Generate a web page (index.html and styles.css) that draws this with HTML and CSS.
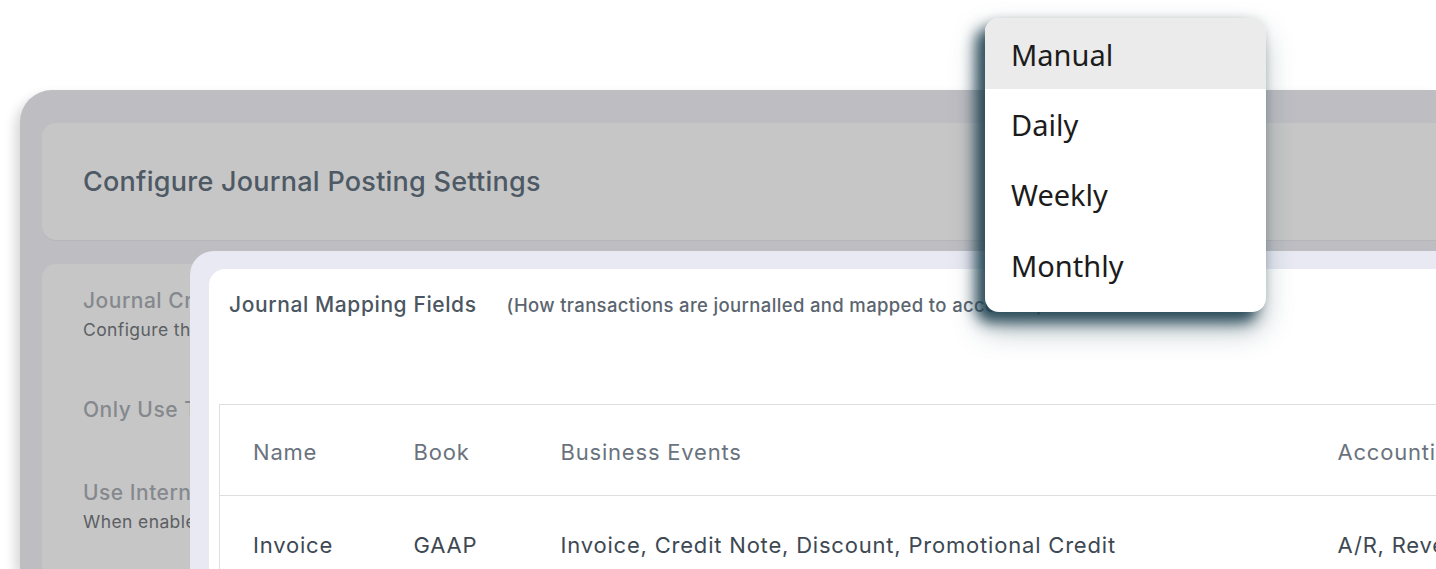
FILE: index.html
```html
<!DOCTYPE html>
<html lang="en">
<head>
<meta charset="utf-8">
<title>Configure Journal Posting Settings</title>
<link rel="stylesheet" href="styles.css">
</head>
<body>
<div class="stage">
  <div class="window">
    <section class="header-card">
      <h1 class="page-title">Configure Journal Posting Settings</h1>
    </section>
    <section class="settings-card">
      <div class="setting">
        <div class="setting-title">Journal Creation Frequency</div>
        <div class="setting-desc">Configure the frequency at which journals are created</div>
      </div>
      <div class="setting setting-single">
        <div class="setting-title">Only Use Transactions After Go-Live</div>
      </div>
      <div class="setting">
        <div class="setting-title">Use Internal Accounts</div>
        <div class="setting-desc">When enabled, internal accounts are used for postings</div>
      </div>
    </section>
  </div>

  <div class="modal">
    <div class="modal-inner">
      <div class="modal-head">
        <span class="modal-title">Journal Mapping Fields</span>
        <span class="modal-sub">(How transactions are journalled and mapped to accounts)</span>
      </div>
      <table class="map-table">
        <thead>
          <tr>
            <th class="c-name">Name</th>
            <th class="c-book">Book</th>
            <th class="c-events">Business Events</th>
            <th class="c-acct">Accounting Entries</th>
          </tr>
        </thead>
        <tbody>
          <tr>
            <td>Invoice</td>
            <td>GAAP</td>
            <td>Invoice, Credit Note, Discount, Promotional Credit</td>
            <td>A/R, Revenue, Tax</td>
          </tr>
        </tbody>
      </table>
    </div>
  </div>

  <ul class="dropdown">
    <li class="opt opt-active">Manual</li>
    <li class="opt">Daily</li>
    <li class="opt">Weekly</li>
    <li class="opt">Monthly</li>
  </ul>
</div>
</body>
</html>
```

FILE: styles.css
```css
* { box-sizing: border-box; }

html, body {
  margin: 0;
  padding: 0;
  background: #ffffff;
  width: 1436px;
  height: 569px;
  overflow: hidden;
  font-family: Inter, "Noto Sans", sans-serif;
}

.stage {
  position: relative;
  width: 1436px;
  height: 569px;
  padding: 90px 0 0 20px;
  overflow: hidden;
}

.window {
  height: 479px;
  background: #bebec2;
  border-radius: 32px 0 0 0;
  padding: 33px 0 0 22px;
  box-shadow: -5px 6px 12px rgba(0, 0, 0, 0.16);
}

.header-card {
  height: 117px;
  background: #c6c6c6;
  border-radius: 14px 0 0 14px;
  display: flex;
  align-items: center;
  padding-left: 41px;
  box-shadow: 0 1px 0 rgba(0,0,0,0.04);
}

.page-title {
  margin: 0;
  font-size: 27px;
  font-weight: 500;
  color: #4d5964;
  letter-spacing: 0.25px;
}

.settings-card {
  margin-top: 24px;
  height: 320px;
  background: #c6c6c6;
  border-radius: 14px 0 0 0;
  padding: 24px 0 0 41px;
  display: flex;
  flex-direction: column;
  gap: 56px;
}

.setting {
  display: flex;
  flex-direction: column;
  gap: 5px;
  white-space: nowrap;
}

.setting-single { margin-bottom: 1px; }

.setting-title {
  font-size: 21px;
  font-weight: 500;
  color: #85898e;
  line-height: 26px;
  letter-spacing: 0.5px;
}

.setting-desc {
  font-size: 17.5px;
  color: #5b5f64;
  line-height: 22px;
  letter-spacing: 0.4px;
}

/* Modal overlaying the settings */
.modal {
  position: absolute;
  left: 190px;
  top: 251px;
  width: 1300px;
  height: 360px;
  background: #e8e9f2;
  border-radius: 24px 0 0 0;
  padding: 18px 0 0 19px;
}

.modal-inner {
  height: 100%;
  background: #ffffff;
  border-radius: 16px 0 0 0;
  padding: 23px 0 0 10px;
}

.modal-head {
  display: flex;
  align-items: baseline;
  gap: 30px;
  padding-left: 10px;
  height: 30px;
}

.modal-title {
  font-size: 21px;
  font-weight: 500;
  color: #4b5661;
  letter-spacing: 0.6px;
}

.modal-sub {
  font-size: 18.5px;
  font-weight: 500;
  color: #5b6570;
  letter-spacing: 0.35px;
}

.map-table {
  margin-top: 82px;
  border-collapse: collapse;
  border: 1px solid #dedede;
  width: 1300px;
  table-layout: fixed;
}

.map-table th,
.map-table td {
  text-align: left;
  padding: 0 0 0 33px;
  white-space: nowrap;
  font-size: 22px;
  letter-spacing: 0.8px;
  overflow: hidden;
}

.map-table th {
  height: 91px;
  font-weight: 400;
  color: #6a737d;
  border-bottom: 1px solid #dedede;
  padding-top: 3px;
}

.map-table td {
  height: 98px;
  color: #3d4853;
  vertical-align: top;
  padding-top: 36px;
}

.c-name { width: 161px; }
.c-book { width: 147px; }
.c-events { width: 777px; }
.c-acct { width: 215px; }

/* Dropdown menu */
.dropdown {
  position: absolute;
  left: 985px;
  top: 18px;
  width: 281px;
  margin: 0;
  padding: 0 0 11px;
  list-style: none;
  background: #ffffff;
  border-radius: 14px;
  overflow: hidden;
  box-shadow: -9px 10px 14px rgba(32, 66, 80, 0.92), -4px 16px 30px rgba(32, 66, 80, 0.4), 0 -2px 10px rgba(0,0,0,0.06);
}

.opt {
  height: 70.5px;
  display: flex;
  align-items: center;
  padding-left: 26px;
  font-size: 29px;
  color: #1c1c1c;
  font-family: "Noto Sans", Inter, sans-serif;
}

.opt:first-child {
  height: 71px;
  padding-top: 2px;
}

.opt-active {
  background: #ebebeb;
}
```
